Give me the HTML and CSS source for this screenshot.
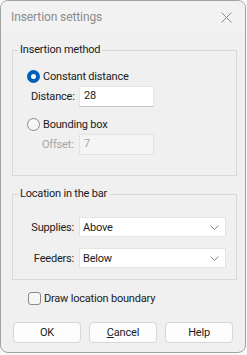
FILE: index.html
```html
<!DOCTYPE html>
<html>
<head>
<meta charset="utf-8">
<link rel="stylesheet" href="styles.css">
</head>
<body>
<div class="window">
  <div class="titlebar">
    <span class="title">Insertion settings</span>
    <svg class="close" width="11" height="11" viewBox="0 0 11 11"><path d="M0.5 0.5 L10.5 10.5 M10.5 0.5 L0.5 10.5" stroke="#8a8a8a" stroke-width="1" fill="none"/></svg>
  </div>
  <fieldset class="group g1">
    <legend>Insertion method</legend>
    <div class="radio-row r1"><span class="radio on"></span><span>Constant distance</span></div>
    <div class="field-row f1"><span class="flabel">Distance:</span><div class="input">28</div></div>
    <div class="radio-row r2"><span class="radio"></span><span>Bounding box</span></div>
    <div class="field-row f2 disabled"><span class="flabel">Offset:</span><div class="input dis">7</div></div>
  </fieldset>
  <fieldset class="group g2">
    <legend>Location in the bar</legend>
    <div class="combo-row c1"><span class="clabel">Supplies:</span><div class="combo"><span>Above</span><svg width="9" height="5" viewBox="0 0 9 5"><path d="M0.5 0.5 L4.5 4.5 L8.5 0.5" stroke="#8a8a8a" fill="none"/></svg></div></div>
    <div class="combo-row c2"><span class="clabel">Feeders:</span><div class="combo"><span>Below</span><svg width="9" height="5" viewBox="0 0 9 5"><path d="M0.5 0.5 L4.5 4.5 L8.5 0.5" stroke="#8a8a8a" fill="none"/></svg></div></div>
  </fieldset>
  <div class="check-row"><span class="check"></span><span>Draw location boundary</span></div>
  <div class="buttons">
    <div class="btn">OK</div>
    <div class="btn"><u>C</u>ancel</div>
    <div class="btn">Help</div>
  </div>
</div>
</body>
</html>
```
FILE: styles.css
```css
html, body {
  margin: 0;
  padding: 0;
  background: #f7f7f7;
}
body {
  width: 247px;
  height: 355px;
  font-family: Roboto, "Noto Sans", sans-serif;
  font-size: 11px;
  letter-spacing: -0.2px;
  color: #1b1b1b;
}
.window {
  box-sizing: border-box;
  width: 246px;
  height: 353px;
  border: 1px solid #a3a3a3;
  border-radius: 8px;
  background: #f0f0f0;
  overflow: hidden;
}
.titlebar {
  height: 32px;
  display: flex;
  align-items: center;
  justify-content: space-between;
  padding: 0 13px 0 10px;
  background: #f2f2f2;
}
.title {
  color: #8c8c8c;
  font-size: 12px;
  letter-spacing: -0.1px;
}
.close {
  display: block;
}
.group {
  box-sizing: border-box;
  width: 225px;
  margin: 0 0 0 11px;
  padding: 0;
  border: 1px solid #d9d9d9;
  min-width: 0;
}
.group legend {
  margin-left: 5px;
  padding: 0 2px;
  line-height: 14px;
}
.g1 {
  margin-top: 10px;
  padding-bottom: 20px;
}
.g2 {
  margin-top: 11px;
  padding-bottom: 11px;
}
.radio-row {
  display: flex;
  align-items: center;
  height: 16px;
  padding-left: 14px;
}
.r1 { margin-top: 11px; }
.r2 { margin-top: 9px; }
.radio {
  box-sizing: border-box;
  width: 13px;
  height: 13px;
  border-radius: 50%;
  border: 1px solid #8a8a8a;
  background: #f7f7f7;
  margin-right: 3px;
}
.radio.on {
  border: 4px solid #005fb8;
  background: #ffffff;
}
.field-row {
  display: flex;
  align-items: center;
  height: 21px;
  margin-top: 2px;
}
.flabel {
  width: 66px;
  padding-left: 18px;
  box-sizing: border-box;
}
.input {
  box-sizing: border-box;
  width: 75px;
  height: 21px;
  background: #ffffff;
  border: 1px solid #e6e6e6;
  border-bottom-color: #c8c8c8;
  padding: 0 0 0 4px;
  line-height: 17px;
}
.disabled .flabel { color: #a6a6a6; padding-left: 29px; }
.input.dis {
  background: #f5f5f5;
  border-color: #e3e3e3;
  color: #a6a6a6;
}
.combo-row {
  display: flex;
  align-items: center;
  height: 20px;
}
.c1 { margin-top: 16px; }
.c2 { margin-top: 11px; }
.clabel {
  box-sizing: border-box;
  width: 66px;
  padding-right: 5px;
  text-align: right;
}
.combo {
  box-sizing: border-box;
  width: 147px;
  height: 20px;
  background: #ffffff;
  border: 1px solid #e3e3e3;
  display: flex;
  align-items: center;
  justify-content: space-between;
  padding: 0 6px 0 3px;
}
.check-row {
  display: flex;
  align-items: center;
  height: 16px;
  margin-top: 10px;
  padding-left: 27px;
}
.check {
  box-sizing: border-box;
  width: 13px;
  height: 13px;
  border: 1px solid #8a8a8a;
  border-radius: 3px;
  background: #f7f7f7;
  margin-right: 3px;
}
.buttons {
  display: flex;
  gap: 8px;
  margin-top: 16px;
  padding-left: 12px;
}
.btn {
  box-sizing: border-box;
  width: 68px;
  height: 21px;
  background: #fdfdfd;
  border: 1px solid #d6d6d6;
  border-radius: 4px;
  display: flex;
  align-items: center;
  justify-content: center;
}
.btn u { text-decoration: underline; }
```
